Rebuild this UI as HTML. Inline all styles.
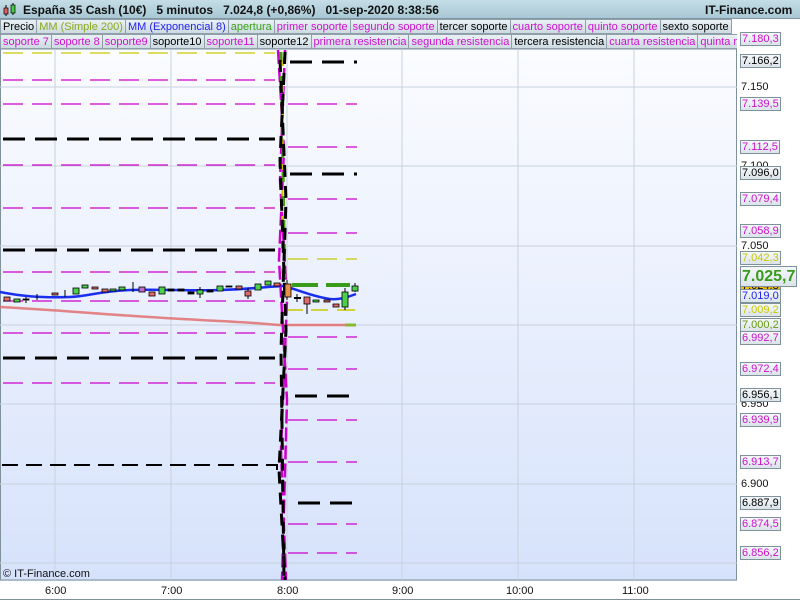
<!DOCTYPE html>
<html><head><meta charset="utf-8"><style>
*{margin:0;padding:0;box-sizing:border-box}
body{width:800px;height:600px;overflow:hidden;background:#fff;font-family:"Liberation Sans",sans-serif;position:relative}
.hdr{position:absolute;left:0;top:0;width:800px;height:19px;background:linear-gradient(#c4dde6,#a9c8d4);border-bottom:1px solid #7f96a2;font-size:12px;font-weight:bold;color:#111}
.hdr span{position:absolute;top:3px;white-space:nowrap}
.lg{position:absolute;left:0;height:15px;font-size:11px;white-space:nowrap;background:#dde8ee;overflow:hidden}
.lg span{display:inline-block;height:15px;line-height:14px;padding:0 2px;border:1px solid #8fa0aa;border-left:none;background:linear-gradient(#e9f1f4,#cddbe2)}
.ax{position:absolute;left:737px;top:19px;width:63px;height:562px;background:#fff}
.lb{position:absolute;left:740px;height:14px;line-height:12px;font-size:11px;padding:0 1px;border:1px solid #7f919b;background:linear-gradient(#f5f8fa,#dbe4ea)}
.pl{position:absolute;left:741px;font-size:11px;color:#111;line-height:12px}
.tm{position:absolute;top:585px;font-size:11px;color:#111}
</style></head><body>
<div class="hdr">
<svg style="position:absolute;left:3px;top:2px" width="14" height="15"><line x1="3" y1="3" x2="3" y2="14" stroke="#000"/><rect x="1" y="6" width="4" height="6" fill="#e06060" stroke="#000" stroke-width=".7"/><line x1="10" y1="1" x2="10" y2="13" stroke="#000"/><rect x="8" y="3" width="4" height="8" fill="#4c4" stroke="#000" stroke-width=".7"/></svg>
<span style="left:23px">España 35 Cash (10€)&nbsp;&nbsp;&nbsp;5 minutos&nbsp;&nbsp;&nbsp;7.024,8 (+0,86%)&nbsp;&nbsp;&nbsp;01-sep-2020 8:38:56</span>
<span style="left:705px">IT-Finance.com</span>
</div>
<div class="ax"></div>
<div class="lg" style="top:19px;width:737px;background:#fff"><span style="border-left:1px solid #8fa0aa;color:#000">Precio</span><span style="color:#8aa81c">MM (Simple 200)</span><span style="color:#2222ee">MM (Exponencial 8)</span><span style="color:#3aa01a">apertura</span><span style="color:#d010d0">primer soporte</span><span style="color:#d010d0">segundo soporte</span><span style="color:#000">tercer soporte</span><span style="color:#d010d0">cuarto soporte</span><span style="color:#d010d0">quinto soporte</span><span style="color:#000">sexto soporte</span></div>
<div class="lg" style="top:34px;width:737px"><span style="border-left:1px solid #8fa0aa;color:#d010d0">soporte 7</span><span style="color:#d010d0">soporte 8</span><span style="color:#d010d0">soporte9</span><span style="color:#000">soporte10</span><span style="color:#d010d0">soporte11</span><span style="color:#000">soporte12</span><span style="color:#d010d0">primera resistencia</span><span style="color:#d010d0">segunda resistencia</span><span style="color:#000">tercera resistencia</span><span style="color:#d010d0">cuarta resistencia</span><span style="color:#d010d0">quinta resistencia</span></div>
<svg style="position:absolute;left:0;top:49px" width="737" height="532" viewBox="0 49 737 532">
<defs><linearGradient id="bg" x1="0" y1="0" x2="0" y2="1"><stop offset="0" stop-color="#fbfcff"/><stop offset="1" stop-color="#d6e2fb"/></linearGradient></defs>
<rect x="0" y="49" width="737" height="532" fill="url(#bg)"/>
<rect x="0.5" y="49" width="736" height="531" fill="none" stroke="#7f919b"/>
<g stroke="#c8d2dc" stroke-width="1">
<line x1="55" y1="49" x2="55" y2="580"/><line x1="171" y1="49" x2="171" y2="580"/><line x1="287" y1="49" x2="287" y2="580"/><line x1="402" y1="49" x2="402" y2="580"/><line x1="518" y1="49" x2="518" y2="580"/><line x1="634" y1="49" x2="634" y2="580"/>
<line x1="0" y1="87" x2="737" y2="87"/><line x1="0" y1="166" x2="737" y2="166"/><line x1="0" y1="246" x2="737" y2="246"/><line x1="0" y1="325" x2="737" y2="325"/><line x1="0" y1="404" x2="737" y2="404"/><line x1="0" y1="484" x2="737" y2="484"/><line x1="0" y1="563" x2="737" y2="563"/>
</g>
<g fill="none" stroke-dasharray="20 9">
<line x1="3" y1="53" x2="275" y2="53" stroke="#c8c800" stroke-width="1.2"/>
<g stroke="#cc00cc" stroke-width="1.2">
<line x1="3" y1="80" x2="275" y2="80"/><line x1="3" y1="104" x2="275" y2="104"/><line x1="3" y1="165" x2="275" y2="165"/><line x1="3" y1="208" x2="275" y2="208"/><line x1="3" y1="272" x2="275" y2="272"/><line x1="3" y1="301" x2="275" y2="301"/><line x1="3" y1="333" x2="275" y2="333"/><line x1="3" y1="383" x2="275" y2="383"/>
<line x1="288" y1="104" x2="357" y2="104"/><line x1="288" y1="147" x2="357" y2="147"/><line x1="288" y1="199" x2="357" y2="199"/><line x1="288" y1="233" x2="357" y2="233"/><line x1="288" y1="337" x2="357" y2="337"/><line x1="288" y1="369" x2="357" y2="369"/><line x1="288" y1="420" x2="357" y2="420"/><line x1="288" y1="462" x2="357" y2="462"/><line x1="288" y1="524" x2="357" y2="524"/><line x1="288" y1="553" x2="357" y2="553"/>
</g>
<line x1="288" y1="259" x2="357" y2="259" stroke="#c8c800" stroke-width="1.2"/>
</g>
<g stroke="#000" stroke-width="3" fill="none" stroke-dasharray="22 10">
<line x1="3" y1="139" x2="275" y2="139"/><line x1="3" y1="250" x2="275" y2="250"/><line x1="3" y1="358" x2="275" y2="358"/>
<line x1="290" y1="62" x2="357" y2="62"/><line x1="290" y1="174" x2="357" y2="174"/><line x1="295" y1="396" x2="350" y2="396"/><line x1="298" y1="503" x2="352" y2="503"/>
</g>
<polyline points="2,465 277,465 277,472" fill="none" stroke="#000" stroke-width="2" stroke-dasharray="16 8"/>
<g stroke="#c8c800" stroke-width="1.5"><line x1="287" y1="310" x2="303" y2="310"/><line x1="311" y1="310" x2="328" y2="310"/><line x1="337" y1="310" x2="355" y2="310"/></g>
<g stroke="#3a9a1a" stroke-width="4"><line x1="292" y1="285" x2="318" y2="285"/><line x1="326" y1="285" x2="350" y2="285"/></g>
<line x1="345" y1="325" x2="356" y2="325" stroke="#8ab830" stroke-width="3"/>
<path d="M0,307 C60,310 120,316 200,320 S260,324 280,325 L345,325" fill="none" stroke="#e07070" stroke-width="2.5" opacity=".85"/>
<path d="M0,292 C20,296 40,298 70,297 C90,296 100,291 130,290 C160,289 190,291 220,290 C250,289 265,287 283,286 C300,290 310,296 330,299 C340,300 348,297 356,294" fill="none" stroke="#1a2ef0" stroke-width="2.5"/>
<g stroke="#cc00cc" stroke-width="2.5" fill="none" stroke-dasharray="14 4">
<polyline points="278,50 284,150 279,260 287,400 282,580"/><polyline points="285,50 280,180 287,300 281,450 286,580"/>
</g>
<g stroke="#4a9a10" stroke-width="3" fill="none" stroke-dasharray="10 14"><polyline points="281,52 285,290"/></g>
<g stroke="#c8c800" stroke-width="2" fill="none" stroke-dasharray="6 20"><polyline points="283,60 282,290"/></g>
<g stroke="#000" stroke-width="3" fill="none" stroke-dasharray="12 9">
<polyline points="285,52 280,160 286,330 279,470 285,580"/><polyline points="280,60 286,200 281,350 284,580"/>
</g>
<g stroke="#000" stroke-width="1">
<line x1="133" y1="282" x2="133" y2="292"/><line x1="307" y1="304" x2="307" y2="314"/><line x1="345" y1="288" x2="345" y2="310"/><line x1="355" y1="283" x2="355" y2="292"/><line x1="287" y1="280" x2="287" y2="300"/>
<line x1="294" y1="298" x2="301" y2="298" stroke-width="2"/><line x1="297" y1="294" x2="297" y2="302"/>
<line x1="26" y1="297" x2="26" y2="303"/><line x1="37" y1="294" x2="37" y2="300"/><line x1="65" y1="290" x2="65" y2="297"/><line x1="200" y1="287" x2="200" y2="298"/><line x1="248" y1="288" x2="248" y2="299"/>
</g>
<g stroke="#000" stroke-width=".8">
<rect x="4" y="297" width="6" height="4" fill="#e06a6a"/><rect x="14" y="299" width="6" height="3" fill="#4cd04c"/><rect x="23" y="299" width="6" height="1" fill="#000"/>
<rect x="52" y="293" width="6" height="2" fill="#e06a6a"/><rect x="73" y="288" width="6" height="6" fill="#4cd04c"/><rect x="82" y="285" width="6" height="3" fill="#4cd04c"/><rect x="92" y="287" width="6" height="2" fill="#e06a6a"/><rect x="102" y="289" width="6" height="3" fill="#e06a6a"/><rect x="110" y="289" width="6" height="2" fill="#4cd04c"/><rect x="119" y="287" width="6" height="3" fill="#4cd04c"/><rect x="139" y="287" width="6" height="5" fill="#c06ac0"/><rect x="149" y="292" width="6" height="4" fill="#e06a6a"/><rect x="159" y="287" width="6" height="7" fill="#4cd04c"/><rect x="168" y="289" width="6" height="2" fill="#000"/><rect x="178" y="289" width="6" height="2" fill="#000"/><rect x="188" y="292" width="6" height="2" fill="#000"/><rect x="197" y="290" width="6" height="4" fill="#4cd04c"/><rect x="207" y="290" width="6" height="2" fill="#000"/><rect x="217" y="286" width="6" height="5" fill="#4cd04c"/><rect x="226" y="286" width="6" height="1" fill="#000"/><rect x="236" y="286" width="6" height="3" fill="#e06a6a"/><rect x="245" y="291" width="6" height="5" fill="#e06a6a"/><rect x="255" y="284" width="6" height="6" fill="#4cd04c"/><rect x="265" y="281" width="6" height="4" fill="#4cd04c"/><rect x="274" y="283" width="6" height="3" fill="#e06a6a"/>
<rect x="285" y="284" width="6" height="13" fill="#e8904a"/><rect x="304" y="297" width="6" height="7" fill="#e06a6a"/><rect x="313" y="300" width="6" height="2" fill="#4cd04c"/><rect x="324" y="300" width="6" height="2" fill="#e06a6a"/><rect x="333" y="304" width="6" height="3" fill="#e06a6a"/><rect x="342" y="292" width="6" height="15" fill="#4cd04c"/><rect x="352" y="286" width="6" height="5" fill="#4cd04c"/>
</g>
<text x="3" y="577" font-family="Liberation Sans" font-size="11" fill="#111">© IT-Finance.com</text>
</svg>
<div class="tm" style="left:45px">6:00</div><div class="tm" style="left:161px">7:00</div><div class="tm" style="left:277px">8:00</div><div class="tm" style="left:392px">9:00</div><div class="tm" style="left:506px">10:00</div><div class="tm" style="left:622px">11:00</div>
<div style="position:absolute;left:0;top:580px;width:800px;height:20px;border-bottom:1px solid #7f919b;pointer-events:none"></div>

<div class="pl" style="top:81px">7.150</div><div class="pl" style="top:160px">7.100</div><div class="pl" style="top:240px">7.050</div><div class="pl" style="top:398px">6.950</div><div class="pl" style="top:478px">6.900</div>
<div class="lb" style="top:32px;color:#d010d0">7.180,3</div>
<div class="lb" style="top:54px;color:#000">7.166,2</div>
<div class="lb" style="top:97px;color:#d010d0">7.139,5</div>
<div class="lb" style="top:140px;color:#d010d0">7.112,5</div>
<div class="lb" style="top:166px;color:#000">7.096,0</div>
<div class="lb" style="top:192px;color:#d010d0">7.079,4</div>
<div class="lb" style="top:224px;color:#d010d0">7.058,9</div>
<div class="lb" style="top:251px;color:#c8c800">7.042,3</div>
<div class="lb" style="top:279px;background:#f7c000;color:#000">7.024,8</div>
<div class="lb" style="top:289px;color:#2222ee">7.019,0</div>
<div class="lb" style="top:303px;color:#c8c800">7.009,2</div>
<div class="lb" style="top:318px;color:#6a9a10">7.000,2</div>
<div class="lb" style="top:331px;color:#d010d0">6.992,7</div>
<div class="lb" style="top:362px;color:#d010d0">6.972,4</div>
<div class="lb" style="top:388px;color:#000">6.956,1</div>
<div class="lb" style="top:413px;color:#d010d0">6.939,9</div>
<div class="lb" style="top:455px;color:#d010d0">6.913,7</div>
<div class="lb" style="top:496px;color:#000">6.887,9</div>
<div class="lb" style="top:517px;color:#d010d0">6.874,5</div>
<div class="lb" style="top:546px;color:#d010d0">6.856,2</div>
<div class="lb" style="top:266px;left:740px;height:21px;line-height:19px;font-size:16px;font-weight:bold;color:#3a9a1a;padding:0 1px">7.025,7</div>
</body></html>
